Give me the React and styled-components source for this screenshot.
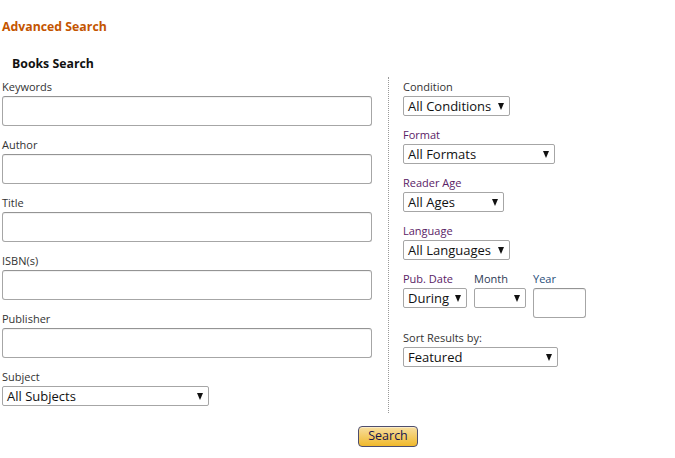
import React from 'react';
import styled, { createGlobalStyle } from 'styled-components';

const GlobalStyle = createGlobalStyle`
    body {
        margin: 0;
        background: #fff;
        font-family: "Open Sans", "Noto Sans", Arial, sans-serif;
        color: #111;
    }
`;

const Page = styled.div`
    width: 675px;
    padding-top: 19px;
`;

const Heading = styled.h1`
    margin: 0 0 0 2px;
    font-size: 12.3px;
    line-height: 16px;
    font-weight: 700;
    color: #c45500;
`;

const SubHeading = styled.h2`
    margin: 21px 0 0 12px;
    font-size: 12.3px;
    line-height: 16px;
    font-weight: 700;
    color: #111;
`;

const Columns = styled.div`
    display: flex;
    margin-top: 5px;
    padding-left: 2px;
`;

const Column = styled.div`
    display: flex;
    flex-direction: column;
    width: ${p => p.$w || 'auto'};
    padding: 2px 0 7px;
`;

const Divider = styled.div`
    border-left: 1px dotted #999;
    margin: 0 14px 0 15px;
`;

const Field = styled.div`
    display: flex;
    flex-direction: column;
    margin-bottom: 11px;
    &:last-child {
        margin-bottom: 0;
    }
`;

const Label = styled.label`
    font-size: 11px;
    line-height: 15px;
    margin-bottom: 2px;
    color: ${p => p.$tone || '#333'};
`;

const TextBox = styled.div`
    height: 28px;
    width: ${p => p.$w || '368px'};
    border: 1px solid #a6a6a6;
    border-top-color: #949494;
    border-radius: 3px;
    box-shadow: inset 0 1px 0 rgba(0,0,0,0.05);
    background: #fff;
`;

const SelectBox = styled.div`
    box-sizing: border-box;
    width: ${p => p.$w};
    height: 20px;
    border: 1px solid #a6a6a6;
    border-radius: 2px;
    display: flex;
    align-items: center;
    justify-content: space-between;
    padding: 0 5px 0 4px;
    font-size: 13px;
    color: #111;
    background: #fff;
`;

const Arrow = styled.span`
    width: 0;
    height: 0;
    border-left: 3.5px solid transparent;
    border-right: 3.5px solid transparent;
    border-top: 7px solid #111;
    margin-left: 6px;
`;

const DateRow = styled.div`
    display: flex;
    gap: 7px;
    align-items: flex-start;
`;

const ButtonRow = styled.div`
    display: flex;
    margin-top: 13px;
    padding-left: 358px;
`;

const SearchButton = styled.button`
    width: 60px;
    height: 21px;
    padding: 0;
    border: 1px solid #4e4e6e;
    border-radius: 4px;
    background: linear-gradient(to bottom, #f7dea0, #f0b92c);
    box-shadow: inset 0 1px 0 #fbecc6;
    font-family: "Open Sans", Arial, sans-serif;
    font-size: 12.5px;
    line-height: 1;
    color: #14144f;
`;

function Select({ width, value }) {
    return (
        <SelectBox $w={width}>
            <span>{value}</span>
            <Arrow />
        </SelectBox>
    );
}

const textFields = ['Keywords', 'Author', 'Title', 'ISBN(s)', 'Publisher'];
const purple = '#5a2266';

export default function App() {
    return (
        <Page>
            <GlobalStyle />
            <Heading>Advanced Search</Heading>
            <SubHeading>Books Search</SubHeading>
            <Columns>
                <Column $w="371px">
                    {textFields.map(name => (
                        <Field key={name}>
                            <Label>{name}</Label>
                            <TextBox />
                        </Field>
                    ))}
                    <Field>
                        <Label>Subject</Label>
                        <Select width="207px" value="All Subjects" />
                    </Field>
                </Column>
                <Divider />
                <Column>
                    <Field>
                        <Label>Condition</Label>
                        <Select width="107px" value="All Conditions" />
                    </Field>
                    <Field>
                        <Label $tone={purple}>Format</Label>
                        <Select width="152px" value="All Formats" />
                    </Field>
                    <Field>
                        <Label $tone={purple}>Reader Age</Label>
                        <Select width="101px" value="All Ages" />
                    </Field>
                    <Field>
                        <Label $tone={purple}>Language</Label>
                        <Select width="107px" value="All Languages" />
                    </Field>
                    <Field>
                        <DateRow>
                            <Field>
                                <Label $tone={purple}>Pub. Date</Label>
                                <Select width="64px" value="During" />
                            </Field>
                            <Field>
                                <Label $tone="#2b3a55">Month</Label>
                                <Select width="52px" value="" />
                            </Field>
                            <Field>
                                <Label $tone="#2b4f7a">Year</Label>
                                <TextBox $w="51px" />
                            </Field>
                        </DateRow>
                    </Field>
                    <Field>
                        <Label>Sort Results by:</Label>
                        <Select width="155px" value="Featured" />
                    </Field>
                </Column>
            </Columns>
            <ButtonRow>
                <SearchButton>Search</SearchButton>
            </ButtonRow>
        </Page>
    );
}
